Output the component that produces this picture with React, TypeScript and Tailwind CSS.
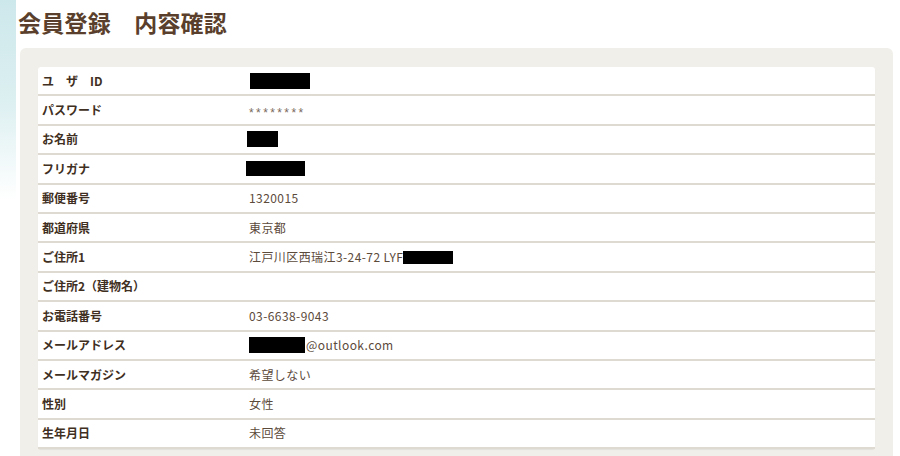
import React from "react";

const rows: { label: React.ReactNode; value: React.ReactNode }[] = [
  { label: "ユ　ザ　ID", value: <span className="inline-block w-[60px] h-[16px] bg-black align-middle ml-[1px]" /> },
  {
    label: "パスワード",
    value: (
      <span
        className="text-[12px] tracking-[2.4px] text-[#7a6a5c] relative top-[2px]"
        style={{ fontFamily: '"Liberation Sans", sans-serif' }}
      >
        ********
      </span>
    ),
  },
  { label: "お名前", value: <span className="inline-block w-[31px] h-[16px] bg-black align-middle -ml-[2px]" /> },
  { label: "フリガナ", value: <span className="inline-block w-[59px] h-[15px] bg-black align-middle -ml-[3px]" /> },
  { label: "郵便番号", value: "1320015" },
  { label: "都道府県", value: "東京都" },
  {
    label: "ご住所1",
    value: (
      <span className="inline-flex items-center">
        江戸川区西瑞江3-24-72 LYF
        <span className="inline-block w-[50px] h-[13px] bg-black" />
      </span>
    ),
  },
  { label: "ご住所2（建物名）", value: "" },
  { label: "お電話番号", value: "03-6638-9043" },
  {
    label: "メールアドレス",
    value: (
      <span className="inline-flex items-center">
        <span className="inline-block w-[56px] h-[16px] bg-black mr-[1px]" />
        @outlook.com
      </span>
    ),
  },
  { label: "メールマガジン", value: "希望しない" },
  { label: "性別", value: "女性" },
  { label: "生年月日", value: "未回答" },
];

export default function App() {
  return (
    <div
      className="relative w-[900px] h-[456px] overflow-hidden bg-white"
      style={{ fontFamily: '"Noto Sans CJK JP", "Noto Sans", sans-serif' }}
    >
      <div className="absolute left-0 top-0 w-[16px] h-[200px] bg-gradient-to-b from-[#cde8eb] via-[#dceff1] to-white" />
      <div className="relative pl-[18px] pt-[6px]">
        <h1 className="text-[23px] font-bold text-[#5a3f2c] leading-[32px] tracking-[0.01em]">
          会員登録　内容確認
        </h1>
      </div>
      <div className="relative ml-[20px] mt-[10px] w-[873px] rounded-[6px] bg-[#f1efe9] pt-[19px] px-[18px] pb-[20px]">
        <div className="rounded-[3px] bg-white shadow-[0_1px_1px_rgba(0,0,0,0.06)]">
          {rows.map((r, i) => (
            <div
              key={i}
              className="flex items-center h-[29.4px] border-b-2 border-[#dedad1] text-[12px] leading-none"
            >
              <div className="w-[211px] pl-[4px] font-bold text-[#3f2f22]">{r.label}</div>
              <div className="text-[#5c4a3b] tracking-[0.035em]">{r.value}</div>
            </div>
          ))}
        </div>
      </div>
    </div>
  );
}
